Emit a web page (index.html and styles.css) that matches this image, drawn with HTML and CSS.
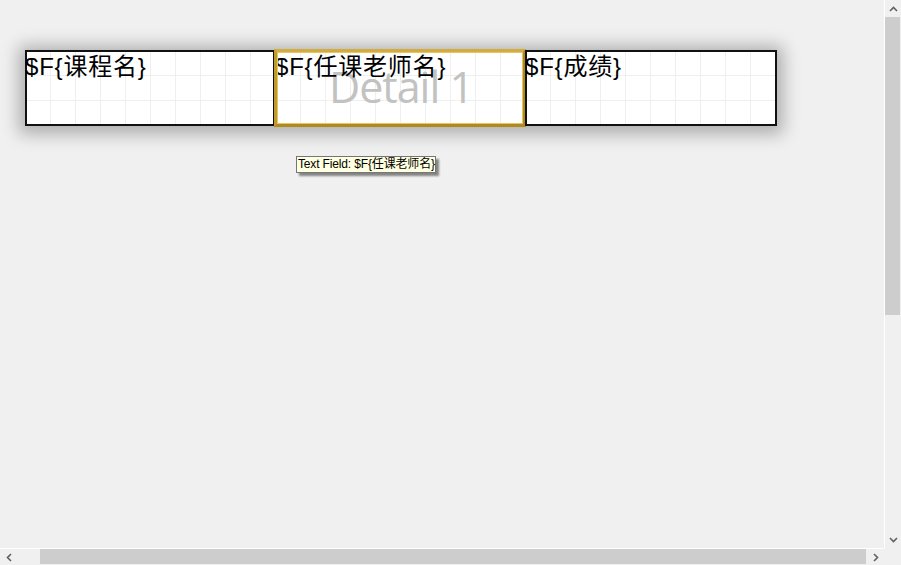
FILE: index.html
```html
<!DOCTYPE html>
<html>
<head>
<meta charset="utf-8">
<link rel="stylesheet" href="styles.css">
</head>
<body>
<div class="window">
  <div class="viewport">
    <div class="band">
      <div class="band-label">Detail 1</div>
      <div class="cell">$F{课程名}</div>
      <div class="cell sel">$F{任课老师名}</div>
      <div class="cell">$F{成绩}</div>
    </div>
    <div class="tip">Text Field: $F{任课老师名}</div>
  </div>
  <div class="vscroll">
    <div class="sbtn"><svg width="9" height="6" viewBox="0 0 9 6"><path d="M1 5 L4.5 1.5 L8 5" fill="none" stroke="#606060" stroke-width="1.6"/></svg></div>
    <div class="vthumb"></div>
    <div class="vtrack"></div>
    <div class="sbtn"><svg width="9" height="6" viewBox="0 0 9 6"><path d="M1 1 L4.5 4.5 L8 1" fill="none" stroke="#606060" stroke-width="1.6"/></svg></div>
  </div>
  <div class="hscroll">
    <div class="sbtn"><svg width="6" height="9" viewBox="0 0 6 9"><path d="M5 1 L1.5 4.5 L5 8" fill="none" stroke="#606060" stroke-width="1.6"/></svg></div>
    <div class="htrack"><div class="hthumb"></div></div>
    <div class="sbtn"><svg width="6" height="9" viewBox="0 0 6 9"><path d="M1 1 L4.5 4.5 L1 8" fill="none" stroke="#606060" stroke-width="1.6"/></svg></div>
  </div>
  <div class="corner"></div>
</div>
</body>
</html>
```
FILE: styles.css
```css
html, body {
  margin: 0;
  padding: 0;
  background: #f0f0f0;
}
.window {
  width: 901px;
  height: 565px;
  display: grid;
  grid-template-columns: 884px 17px;
  grid-template-rows: 548px 17px;
  overflow: hidden;
}
.viewport {
  position: relative;
  padding: 50px 0 0 25px;
  background: #f0f0f0;
  overflow: hidden;
}
.band {
  position: relative;
  width: 752px;
  height: 76px;
  display: grid;
  grid-template-columns: 250px 250px 252px;
  background-color: #fff;
  background-image:
    linear-gradient(to right, #efefef 1px, transparent 1px),
    linear-gradient(to bottom, #efefef 1px, transparent 1px);
  background-size: 25px 25px;
  box-shadow: 0 2px 16px 6px rgba(0, 0, 0, 0.28);
}
.band-label {
  position: absolute;
  left: 0;
  right: 0;
  top: 15px;
  text-align: center;
  font-family: "Open Sans", "Noto Sans", sans-serif;
  font-size: 43px;
  line-height: 43px;
  letter-spacing: -1px;
  color: #c2c2c2;
}
.cell {
  position: relative;
  box-shadow: inset 0 0 0 2px #111;
  padding-top: 3px;
  font-family: "Liberation Sans", "Noto Sans CJK SC", sans-serif;
  font-size: 24px;
  line-height: 28px;
  letter-spacing: 0.8px;
  color: #000;
  white-space: nowrap;
}
.cell.sel {
  box-shadow: none;
}
.cell.sel::after {
  content: "";
  position: absolute;
  top: -1px;
  left: -1px;
  right: -1px;
  bottom: -1px;
  border: 3px solid #b08a1c;
  border-top-color: #d2ac40;
  border-left-color: #c09a2c;
  box-shadow: inset 0 0 0 1px #e6c660;
}
.tip {
  position: absolute;
  left: 296px;
  top: 156px;
  height: 15px;
  padding: 0 0 0 1px;
  border: 1px solid #767676;
  background: #ffffe1;
  box-shadow: 3px 3px 2px rgba(0, 0, 0, 0.45);
  font-family: "Liberation Sans", "Noto Sans CJK SC", sans-serif;
  font-size: 12px;
  line-height: 15px;
  letter-spacing: -0.15px;
  color: #000;
  white-space: nowrap;
}
.vscroll {
  border-left: 1px solid #fff;
  background: #f0f0f0;
  display: flex;
  flex-direction: column;
}
.sbtn {
  flex: 0 0 17px;
  display: flex;
  align-items: center;
  justify-content: center;
}
.vscroll .sbtn {
  height: 17px;
}
.vthumb {
  height: 298px;
  margin-right: 1px;
  background: #cdcdcd;
}
.vtrack {
  flex: 1;
}
.hscroll {
  border-top: 1px solid #fff;
  background: #f0f0f0;
  display: flex;
}
.hscroll .sbtn {
  width: 17px;
}
.htrack {
  flex: 1;
  padding-left: 23px;
}
.hthumb {
  width: 826px;
  height: 15px;
  background: #cdcdcd;
}
.corner {
  background: #f0f0f0;
}
```
